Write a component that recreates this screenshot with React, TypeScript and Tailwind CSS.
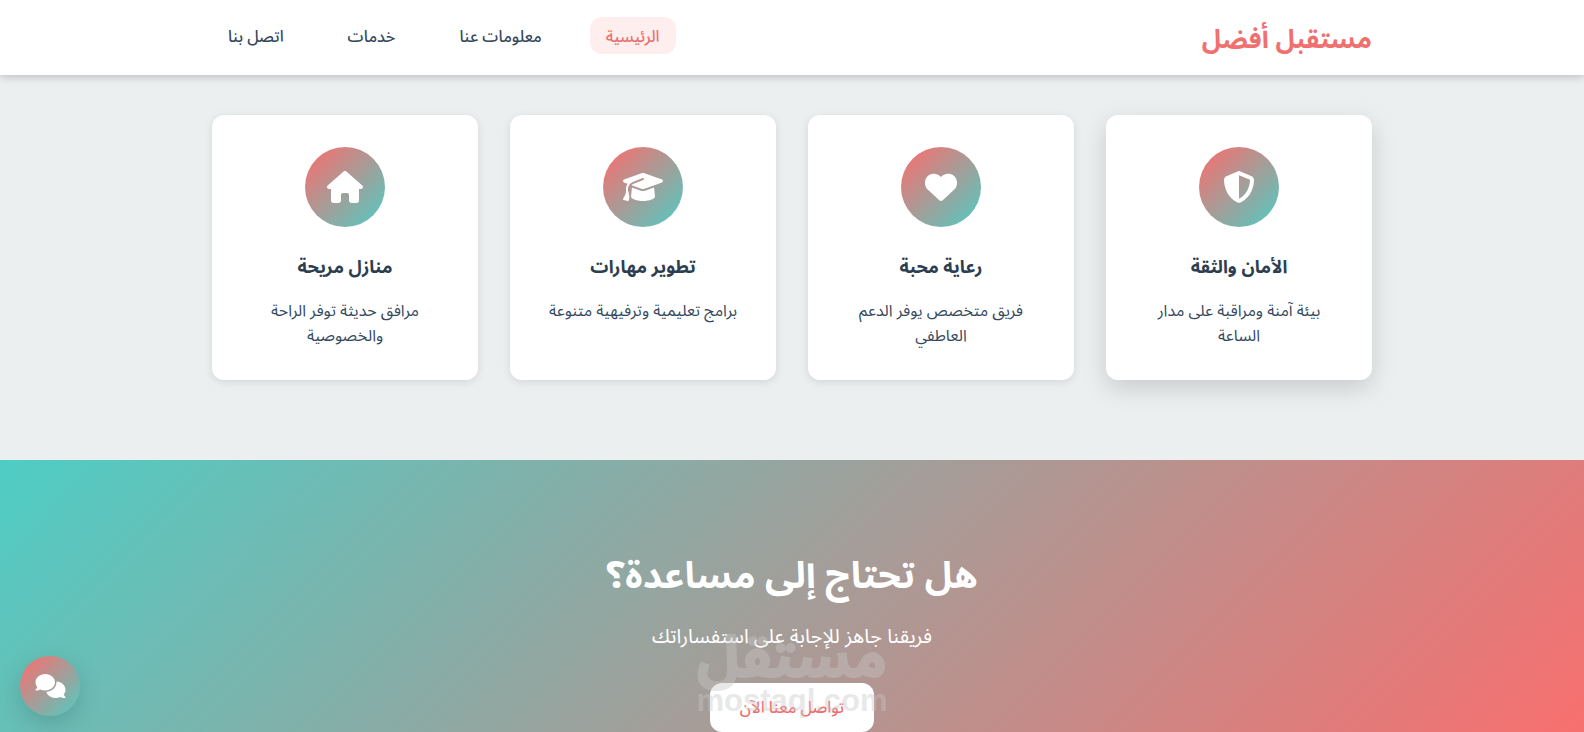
import {
  FaComments,
  FaGraduationCap,
  FaHeart,
  FaHouse,
  FaShieldHalved,
} from "react-icons/fa6";

const navItems = [
  { label: "الرئيسية", href: "#home", active: true },
  { label: "معلومات عنا", href: "#about", active: false },
  { label: "خدمات", href: "#services", active: false },
  { label: "اتصل بنا", href: "#contact", active: false },
];

const features = [
  {
    title: "الأمان والثقة",
    text: "بيئة آمنة ومراقبة على مدار الساعة",
    icon: <FaShieldHalved className="h-8 w-8" />,
    raised: true,
  },
  {
    title: "رعاية محبة",
    text: "فريق متخصص يوفر الدعم العاطفي",
    icon: <FaHeart className="h-8 w-8" />,
    raised: false,
  },
  {
    title: "تطوير مهارات",
    text: "برامج تعليمية وترفيهية متنوعة",
    icon: <FaGraduationCap className="h-8 w-10" />,
    raised: false,
  },
  {
    title: "منازل مريحة",
    text: "مرافق حديثة توفر الراحة والخصوصية",
    icon: <FaHouse className="h-8 w-9" />,
    raised: false,
  },
];

function Header() {
  return (
    <header className="sticky top-0 z-10 bg-white shadow-[0_2px_8px_rgba(0,0,0,0.2)]">
      <div className="mx-auto flex h-[75px] max-w-[1200px] items-center justify-between px-5">
        <a href="#home" className="pt-1 text-[26px] font-bold text-[#f07070]">
          مستقبل أفضل
        </a>
        <nav className="pb-1">
          <ul className="flex gap-8">
            {navItems.map((item) => (
              <li key={item.href}>
                <a
                  href={item.href}
                  className={
                    item.active
                      ? "block rounded-xl bg-[#ffeeee] px-4 pt-[10px] pb-[6px] text-base leading-[21px] font-medium text-[#e8716f]"
                      : "block rounded-xl px-4 pt-[10px] pb-[6px] text-base leading-[21px] font-medium text-[#34495e]"
                  }
                >
                  {item.label}
                </a>
              </li>
            ))}
          </ul>
        </nav>
      </div>
    </header>
  );
}

function Features() {
  return (
    <section className="pt-10 pb-20">
      <div className="mx-auto grid max-w-[1200px] grid-cols-4 gap-8 px-5">
        {features.map((f) => (
          <article
            key={f.title}
            className={
              f.raised
                ? "rounded-xl bg-white px-8 pt-8 pb-[31px] text-center shadow-[0_8px_25px_rgba(0,0,0,0.15)]"
                : "rounded-xl bg-white px-8 pt-8 pb-[31px] text-center shadow-[0_2px_8px_rgba(0,0,0,0.1)]"
            }
          >
            <div className="mx-auto mb-6 flex h-20 w-20 items-center justify-center rounded-full bg-[linear-gradient(135deg,#ff6b6b,#4ecdc4)] text-white">
              {f.icon}
            </div>
            <h3 className="mb-4 text-lg leading-8 font-bold text-[#2c3e50]">{f.title}</h3>
            <p className="min-h-[50px] text-base leading-[25px] text-[#34495e]">{f.text}</p>
          </article>
        ))}
      </div>
    </section>
  );
}

function Watermark() {
  return (
    <div
      aria-hidden="true"
      className="pointer-events-none absolute top-[173px] left-1/2 flex -translate-x-1/2 flex-col items-center whitespace-nowrap text-[#c8c8c8] opacity-40"
    >
      <span className="text-[57px] leading-[52px] font-bold [-webkit-text-stroke:2px_#c8c8c8]">مستقل</span>
      <span dir="ltr" className="font-['Liberation_Sans',sans-serif] text-[31px] leading-8 font-bold">
        mostaql.com
      </span>
    </div>
  );
}

function CallToAction() {
  return (
    <section className="relative bg-[linear-gradient(135deg,#4ecdc4,#ff6b6b)] px-5 py-20 text-center text-white">
      <h2 className="mb-[14px] pt-1 text-[37px] leading-[64px] font-bold">هل تحتاج إلى مساعدة؟</h2>
      <p className="mb-[30px] text-xl leading-[31px]">فريقنا جاهز للإجابة على استفساراتك</p>
      <a
        href="#contact"
        className="inline-block rounded-xl bg-white px-[30px] pt-[13px] pb-[11px] text-base leading-[25px] font-medium text-[#ee6f6e]"
      >
        تواصل معنا الآن
      </a>
      <Watermark />
    </section>
  );
}

export default function App() {
  return (
    <div
      dir="rtl"
      lang="ar"
      className="min-h-screen bg-[#ebeff0] font-['Noto_Sans_Arabic','DejaVu_Sans',sans-serif]"
    >
      <Header />
      <main>
        <Features />
        <CallToAction />
      </main>
      <button
        type="button"
        aria-label="محادثة"
        className="fixed bottom-4 left-5 z-20 flex h-[60px] w-[60px] items-center justify-center rounded-full bg-[linear-gradient(135deg,#ff6b6b,#4ecdc4)] text-white shadow-[0_8px_25px_rgba(0,0,0,0.15)]"
      >
        <FaComments className="h-6 w-[31px]" />
      </button>
    </div>
  );
}
